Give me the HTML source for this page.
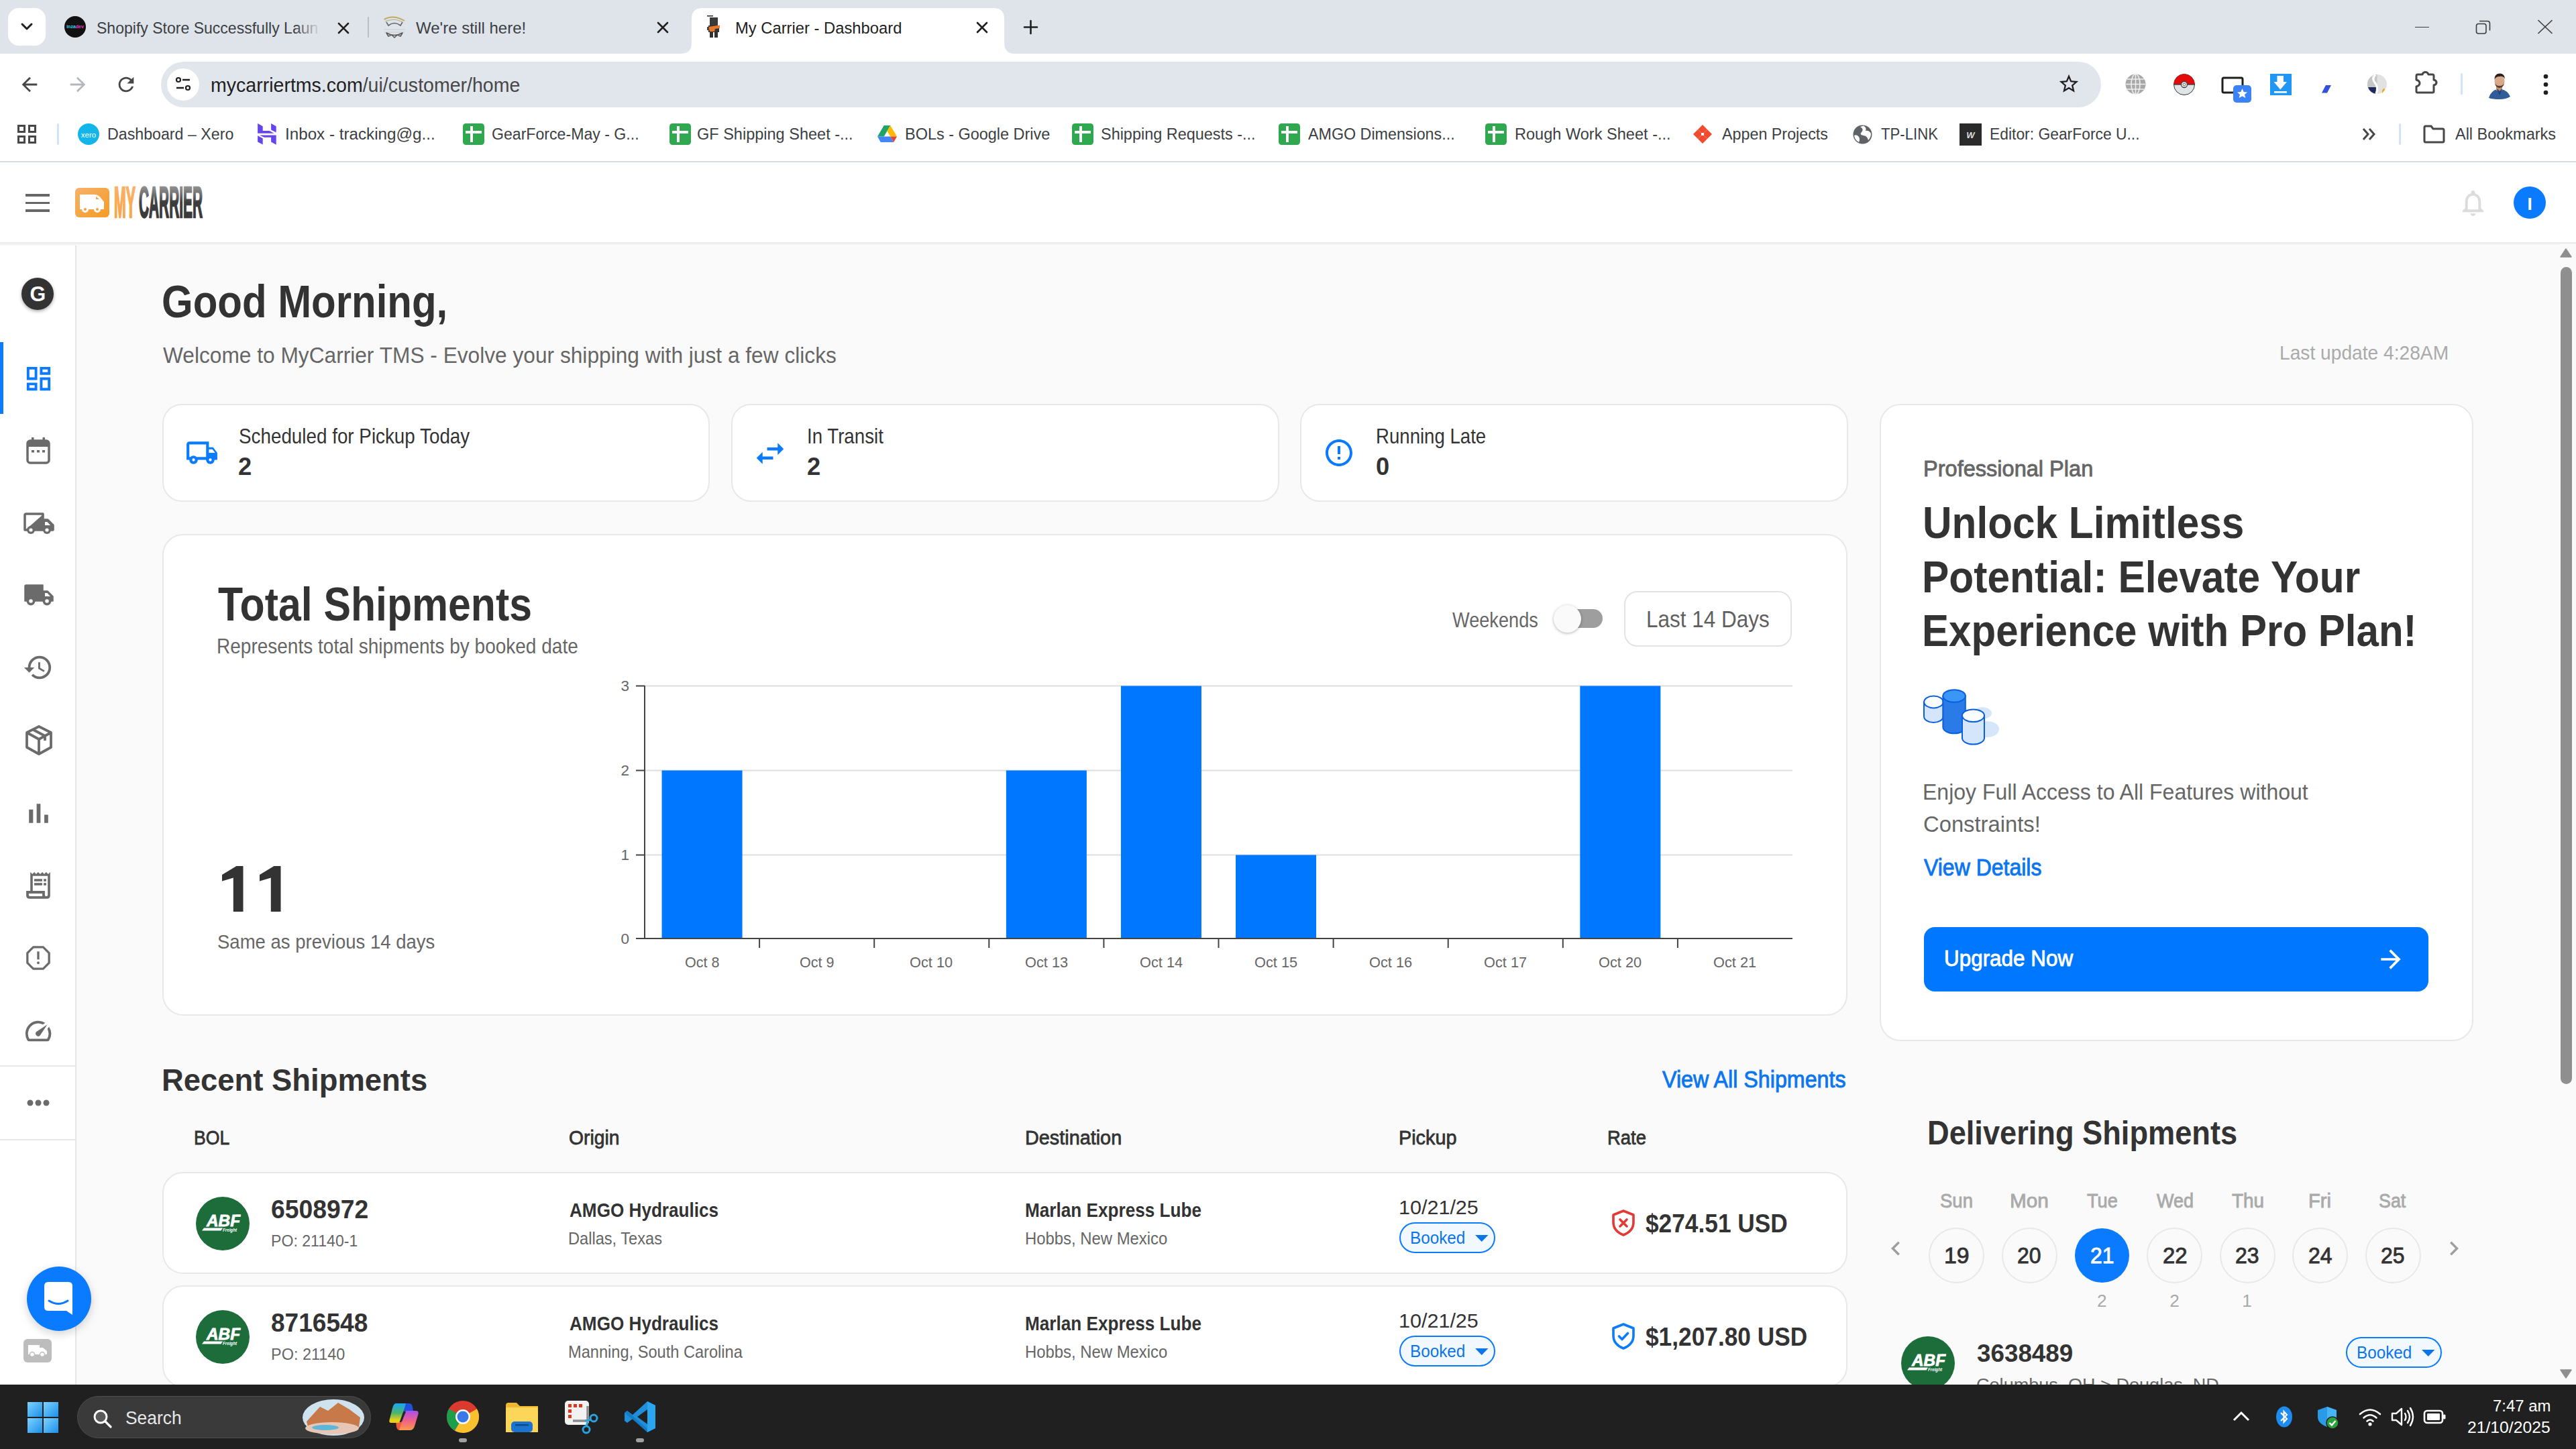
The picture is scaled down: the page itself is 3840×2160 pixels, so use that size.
<!DOCTYPE html>
<html><head><meta charset="utf-8"><style>
html,body{margin:0;padding:0;}
body{width:3840px;height:2160px;overflow:hidden;position:relative;background:#fafafa;font-family:"Liberation Sans", sans-serif;}
.t{position:absolute;white-space:nowrap;transform-origin:0 50%;}
svg{overflow:visible}
</style></head><body>
<div style="position:absolute;left:0px;top:0px;width:3840px;height:2160px;background:#fafafa"></div>
<div style="position:absolute;left:0px;top:0px;width:3840px;height:80px;background:#dfe3ea"></div>
<div style="position:absolute;left:12px;top:12px;width:56px;height:56px;background:#fff;border-radius:16px"></div>
<svg style="position:absolute;left:28px;top:32px;" width="24" height="16" viewBox="0 0 24 16"><path d="M5 4 L12 11 L19 4" stroke="#1f1f1f" stroke-width="3" fill="none" stroke-linecap="round" stroke-linejoin="round"/></svg>
<div style="position:absolute;left:96px;top:24px;width:32px;height:32px;background:#111;border-radius:50%"></div>
<svg style="position:absolute;left:100px;top:34px;" width="24" height="12" viewBox="0 0 24 12"><text x="12" y="8" font-size="7" font-weight="bold" fill="#35d0e8" text-anchor="middle" font-family="Liberation Sans">inza<tspan fill="#e83ecb">dev</tspan></text></svg>
<div class="t" style="left:144.05px;top:29.87px;font-size:24.13px;line-height:24.13px;color:#3c4043;transform:scaleX(0.9547);">Shopify Store Successfully Laun</div>
<div style="position:absolute;left:440px;top:20px;width:45px;height:40px;background:linear-gradient(to right, rgba(223,227,234,0), #dfe3ea 85%)"></div>
<svg style="position:absolute;left:504.0px;top:34.0px;" width="16" height="16" viewBox="0 0 16 16"><path d="M1 1 L15 15 M15 1 L1 15" stroke="#1f1f1f" stroke-width="2.6" stroke-linecap="round"/></svg>
<div style="position:absolute;left:548px;top:25px;width:2px;height:31px;background:#b9bec6;border-radius:1px"></div>
<svg style="position:absolute;left:570px;top:22px;" width="36" height="36" viewBox="0 0 36 36"><path d="M2.5 7 Q16 -1 33 9" stroke="#c4a85a" stroke-width="2" fill="none"/><path d="M4 10 Q18 4 30 11" stroke="#aab08a" stroke-width="1.2" fill="none"/><path d="M6 11 L9 16 Q18 9 27 16 L30 11" stroke="#666" stroke-width="1.6" fill="none"/><path d="M2 22 H34 M3 26 H33" stroke="#c9ccd2" stroke-width="1.2"/><path d="M6 27 L9 32 L14 30 L18 34 L22 30 L27 32 L30 27 Q18 34 6 27Z" fill="#f4f4f4" stroke="#555" stroke-width="1.6" stroke-linejoin="round"/></svg>
<div class="t" style="left:620.00px;top:29.87px;font-size:24.13px;line-height:24.13px;color:#3c4043;transform:scaleX(0.9948);">We&#x27;re still here!</div>
<svg style="position:absolute;left:980.0px;top:33.0px;" width="16" height="16" viewBox="0 0 16 16"><path d="M1 1 L15 15 M15 1 L1 15" stroke="#1f1f1f" stroke-width="2.6" stroke-linecap="round"/></svg>
<svg style="position:absolute;left:1015px;top:12px;" width="498" height="68" viewBox="0 0 498 68"><path d="M0 68 Q16 68 16 52 L16 16 Q16 0 32 0 L466 0 Q482 0 482 16 L482 52 Q482 68 498 68 Z" fill="#fff"/></svg>
<svg style="position:absolute;left:1052px;top:22px;" width="24" height="36" viewBox="0 0 24 36"><rect x="2" y="1" width="9" height="1.6" fill="#333"/><rect x="6" y="4" width="12" height="12" fill="#3a3a3a"/><rect x="4" y="16" width="16" height="10" fill="#333"/><path d="M4 18 L21 15.5 L21 20 L14 21 L13 25 L6 25 L5 21Z" fill="#e8772a"/><rect x="2" y="18" width="3" height="5" fill="#444"/><rect x="6" y="26" width="5" height="8" fill="#333"/><rect x="13" y="26" width="5" height="8" fill="#333"/></svg>
<div class="t" style="left:1096.01px;top:29.87px;font-size:24.13px;line-height:24.13px;color:#1f1f1f;transform:scaleX(0.9855);">My Carrier - Dashboard</div>
<svg style="position:absolute;left:1456.0px;top:33.0px;" width="16" height="16" viewBox="0 0 16 16"><path d="M1 1 L15 15 M15 1 L1 15" stroke="#1f1f1f" stroke-width="2.6" stroke-linecap="round"/></svg>
<svg style="position:absolute;left:1526px;top:30px;" width="21" height="21" viewBox="0 0 21 21"><path d="M10.5 1 V20 M1 10.5 H20" stroke="#1f1f1f" stroke-width="2.6" stroke-linecap="round"/></svg>
<div style="position:absolute;left:3600px;top:39.5px;width:21px;height:1.5px;background:#3c3c3c"></div>
<svg style="position:absolute;left:3690px;top:30px;" width="24" height="21" viewBox="0 0 24 21"><rect x="1.5" y="5.5" width="14.5" height="14.5" rx="3" stroke="#3c3c3c" stroke-width="1.6" fill="none"/><path d="M6 1.5 H18 Q21.5 1.5 21.5 5 V15.5" stroke="#3c3c3c" stroke-width="1.6" fill="none"/></svg>
<svg style="position:absolute;left:3782px;top:29px;" width="24" height="22" viewBox="0 0 24 22"><path d="M1.5 1 L22.5 21 M22.5 1 L1.5 21" stroke="#3c3c3c" stroke-width="1.6"/></svg>
<div style="position:absolute;left:0px;top:80px;width:3840px;height:160px;background:#fff"></div>
<div style="position:absolute;left:0px;top:240px;width:3840px;height:2px;background:#d9dce0"></div>
<svg style="position:absolute;left:27.0px;top:109.0px;" width="34" height="34" viewBox="0 0 24 24"><path d="M20 11H7.83l5.59-5.59L12 4l-8 8 8 8 1.41-1.41L7.83 13H20v-2z" fill="#474747" /></svg>
<svg style="position:absolute;left:98.5px;top:109.0px;" width="34" height="34" viewBox="0 0 24 24"><path d="M12 4l-1.41 1.41L16.17 11H4v2h12.17l-5.58 5.59L12 20l8-8z" fill="#b4b7bb" /></svg>
<svg style="position:absolute;left:171.0px;top:109.0px;" width="34" height="34" viewBox="0 0 24 24"><path d="M17.65 6.35C16.2 4.9 14.21 4 12 4c-4.42 0-7.99 3.58-7.99 8s3.57 8 7.99 8c3.73 0 6.84-2.55 7.73-6h-2.08c-.82 2.33-3.04 4-5.65 4-3.31 0-6-2.69-6-6s2.69-6 6-6c1.66 0 3.14.69 4.22 1.78L13 11h7V4l-2.35 2.35z" fill="#474747" /></svg>
<div style="position:absolute;left:240px;top:92px;width:2892px;height:68px;background:#e1e5ec;border-radius:34px"></div>
<div style="position:absolute;left:249px;top:102px;width:48px;height:48px;background:#fff;border-radius:50%"></div>
<svg style="position:absolute;left:261px;top:114px;" width="24" height="24" viewBox="0 0 24 24"><circle cx="5" cy="5" r="3" stroke="#1f1f1f" stroke-width="2.2" fill="none"/><path d="M11 5 H22 M2 17 H13" stroke="#1f1f1f" stroke-width="2.4"/><circle cx="19" cy="17" r="3" stroke="#1f1f1f" stroke-width="2.2" fill="none"/></svg>
<div class="t" style="left:314.03px;top:111.82px;font-size:29.50px;line-height:29.50px;color:#1f1f1f;transform:scaleX(0.9672);">mycarriertms.com<span style="color:#474747">/ui/customer/home</span></div>
<svg style="position:absolute;left:3067.0px;top:108.0px;" width="34" height="34" viewBox="0 0 24 24"><path d="M22 9.24l-7.19-.62L12 2 9.19 8.63 2 9.24l5.46 4.73L5.82 21 12 17.27 18.18 21l-1.63-7.03L22 9.24zM12 15.4l-3.76 2.27 1-4.28-3.32-2.88 4.38-.38L12 6.1l1.71 4.04 4.38.38-3.32 2.88 1 4.28L12 15.4z" fill="#1f1f1f" /></svg>
<svg style="position:absolute;left:3167px;top:109px;" width="33" height="33" viewBox="0 0 33 33"><circle cx="16.5" cy="16.5" r="15" fill="#a8a8a8"/><g stroke="#eee" stroke-width="1.6" fill="none"><ellipse cx="16.5" cy="16.5" rx="6.5" ry="15"/><path d="M2 16.5 H31 M4 9 H29 M4 24 H29 M16.5 1.5 V31.5"/></g></svg>
<svg style="position:absolute;left:3239px;top:109px;" width="34" height="34" viewBox="0 0 34 34"><circle cx="17" cy="17" r="15.5" fill="#dfe4e7" stroke="#333" stroke-width="1"/><path d="M1.5 17 A15.5 15.5 0 0 1 32.5 17Z" fill="#e30b0b"/><path d="M1.5 17 H32.5" stroke="#333" stroke-width="1.2"/><circle cx="17" cy="17" r="4.5" fill="#f4f4f4" stroke="#444" stroke-width="1.3"/><circle cx="17" cy="17" r="2" fill="none" stroke="#666" stroke-width="1"/></svg>
<svg style="position:absolute;left:3311px;top:112.5px;" width="46" height="40" viewBox="0 0 46 40"><rect x="2" y="3" width="30" height="22" rx="2" stroke="#1f1f1f" stroke-width="3" fill="none"/><rect x="18" y="14" width="27" height="26" rx="5" fill="#3b82f6"/><path d="M31.5 19 l2.2 5 5.3 .4-4 3.5 1.3 5.2-4.8-2.8-4.8 2.8 1.3-5.2-4-3.5 5.3-.4z" fill="#fff"/></svg>
<svg style="position:absolute;left:3383px;top:109px;" width="34" height="34" viewBox="0 0 34 34"><rect x="1" y="1" width="32" height="32" fill="#2196f3"/><path d="M11.5 4 H21 V13 H26 L16.25 24.5 L6.5 13 H11.5Z" fill="#fff"/><rect x="7" y="27" width="19" height="2.6" fill="#fff"/></svg>
<svg style="position:absolute;left:3455px;top:122px;" width="24" height="20" viewBox="0 0 24 20"><path d="M6 16.5 L12 5 H20 L14 16.5Z" fill="#3350d8"/></svg>
<svg style="position:absolute;left:3527px;top:110px;" width="34" height="32" viewBox="0 0 34 32"><circle cx="16.5" cy="15.5" r="14.5" fill="#e2e2e2"/><path d="M16.5 1 A14.5 14.5 0 0 0 2 15.5 A14.5 14.5 0 0 0 16.5 30 Z" fill="#c6c6c6"/><path d="M3 20 H16 V30 Q6 29 3 20Z" fill="#1c2a5c"/><path d="M14 1.5 Q8 7 13 13 Q19 19 15 30" stroke="#fff" stroke-width="3.2" fill="none"/><path d="M24 25 L27 21 L28 24 L24 29Z" fill="#f2a71b"/></svg>
<svg style="position:absolute;left:3600px;top:106px;" width="38" height="36" viewBox="0 0 38 36"><path d="M4 5 H11 Q12 1.5 15.5 1.5 Q19 1.5 20 5 H26 Q28 5 28 7 V13 Q32 14 32 17 Q32 20 28 21 V30 Q28 32 26 32 H4 Q2 32 2 30 V23 Q7 21.5 7 18 Q7 14.5 2 13 V7 Q2 5 4 5Z" fill="none" stroke="#474747" stroke-width="3" stroke-linejoin="round"/></svg>
<div style="position:absolute;left:3668px;top:109px;width:3px;height:32px;background:#d3e3fd;border-radius:2px"></div>
<svg style="position:absolute;left:3710px;top:106px;" width="32" height="42" viewBox="0 0 32 42"><path d="M0 40 Q3 29 13 27 H19 Q28 29 32 38 Q26 42 16 42 Q6 42 0 40Z" fill="#2f5d9a"/><rect x="11" y="21" width="9" height="8" fill="#c48f72"/><ellipse cx="16" cy="15" rx="7.5" ry="9.5" fill="#d9a88a"/><path d="M8.5 13 Q8 4 16 3.5 Q24 3.5 24 12 Q22 7 16 8 Q10 8 8.5 13Z" fill="#2a1f1a"/><path d="M9 17 Q10 25 16 25 Q22 25 23 17 Q22 22 16 22 Q10 22 9 17Z" fill="#5a3f30"/><path d="M13 27 L16 34 L19 27" stroke="#1f3f6e" stroke-width="1.5" fill="none"/></svg>
<svg style="position:absolute;left:3787px;top:110px;" width="16" height="32" viewBox="0 0 16 32"><circle cx="8" cy="4" r="3.3" fill="#1f1f1f"/><circle cx="8" cy="16" r="3.3" fill="#1f1f1f"/><circle cx="8" cy="28" r="3.3" fill="#1f1f1f"/></svg>
<svg style="position:absolute;left:26px;top:186px;" width="28" height="28" viewBox="0 0 28 28"><g stroke="#474747" stroke-width="3" fill="none"><rect x="1.5" y="1.5" width="9" height="9"/><rect x="17.5" y="1.5" width="9" height="9"/><rect x="1.5" y="17.5" width="9" height="9"/><rect x="17.5" y="17.5" width="9" height="9"/></g></svg>
<div style="position:absolute;left:85px;top:184px;width:3px;height:32px;background:#d3e3fd;border-radius:2px"></div>
<div style="position:absolute;left:116px;top:184px;width:32px;height:32px;background:#13b5ea;border-radius:50%"></div>
<svg style="position:absolute;left:116px;top:184px;" width="32" height="32" viewBox="0 0 32 32"><text x="16" y="20.5" font-size="11.5" fill="#fff" text-anchor="middle" font-family="Liberation Sans">xero</text></svg>
<div class="t" style="left:160.03px;top:187.99px;font-size:23.98px;line-height:23.98px;color:#3c4043;transform:scaleX(0.9679);">Dashboard – Xero</div>
<svg style="position:absolute;left:370px;top:175px;" width="60" height="50" viewBox="0 0 60 50"><g fill="#6646ea"><path d="M14.1 9.1 L21.7 13.3 V20 H31.7 L38.6 23.8 H14.1Z"/><path d="M34.1 9.1 L41.7 13.3 V22.6 L34.1 18.6Z"/><path d="M14.1 27.2 L21.7 31.2 V40.5 L14.1 36.6Z"/><path d="M16.9 26.4 H41.7 V40.7 L34.1 36.6 V29.8 H23.8Z"/></g></svg>
<div class="t" style="left:424.98px;top:187.99px;font-size:23.98px;line-height:23.98px;color:#3c4043;transform:scaleX(1.0099);">Inbox - tracking@g...</div>
<svg style="position:absolute;left:690px;top:184px;" width="32" height="32" viewBox="0 0 32 32"><rect x="0" y="0" width="32" height="32" rx="4.5" fill="#2fa84f"/><rect x="11" y="4" width="4" height="24" fill="#fff"/><rect x="4" y="11" width="24" height="4" fill="#fff"/></svg>
<div class="t" style="left:733.04px;top:187.99px;font-size:23.98px;line-height:23.98px;color:#3c4043;transform:scaleX(0.9641);">GearForce-May - G...</div>
<svg style="position:absolute;left:998px;top:184px;" width="32" height="32" viewBox="0 0 32 32"><rect x="0" y="0" width="32" height="32" rx="4.5" fill="#2fa84f"/><rect x="11" y="4" width="4" height="24" fill="#fff"/><rect x="4" y="11" width="24" height="4" fill="#fff"/></svg>
<div class="t" style="left:1039.02px;top:187.99px;font-size:23.98px;line-height:23.98px;color:#3c4043;transform:scaleX(0.9809);">GF Shipping Sheet -...</div>
<svg style="position:absolute;left:1307.5px;top:187px;" width="29" height="26" viewBox="0 0 29 26"><path d="M9.7 0 H19.3 L14.5 8.3 L9.7 16.6 H0Z" fill="#1fa463"/><path d="M19.3 0 L29 16.6 H19.3 L14.5 8.3Z" fill="#ffba00"/><path d="M0 16.6 H19.3 L24.2 25 H4.8Z" fill="#4285f4"/><path d="M19.3 16.6 H29 L24.2 25Z" fill="#ea4335"/></svg>
<div class="t" style="left:1349.02px;top:187.99px;font-size:23.98px;line-height:23.98px;color:#3c4043;transform:scaleX(0.9782);">BOLs - Google Drive</div>
<svg style="position:absolute;left:1598px;top:184px;" width="32" height="32" viewBox="0 0 32 32"><rect x="0" y="0" width="32" height="32" rx="4.5" fill="#2fa84f"/><rect x="11" y="4" width="4" height="24" fill="#fff"/><rect x="4" y="11" width="24" height="4" fill="#fff"/></svg>
<div class="t" style="left:1641.02px;top:187.99px;font-size:23.98px;line-height:23.98px;color:#3c4043;transform:scaleX(0.9778);">Shipping Requests -...</div>
<svg style="position:absolute;left:1906px;top:184px;" width="32" height="32" viewBox="0 0 32 32"><rect x="0" y="0" width="32" height="32" rx="4.5" fill="#2fa84f"/><rect x="11" y="4" width="4" height="24" fill="#fff"/><rect x="4" y="11" width="24" height="4" fill="#fff"/></svg>
<div class="t" style="left:1950.00px;top:187.99px;font-size:23.98px;line-height:23.98px;color:#3c4043;transform:scaleX(0.9712);">AMGO Dimensions...</div>
<svg style="position:absolute;left:2214px;top:184px;" width="32" height="32" viewBox="0 0 32 32"><rect x="0" y="0" width="32" height="32" rx="4.5" fill="#2fa84f"/><rect x="11" y="4" width="4" height="24" fill="#fff"/><rect x="4" y="11" width="24" height="4" fill="#fff"/></svg>
<div class="t" style="left:2258.02px;top:187.99px;font-size:23.98px;line-height:23.98px;color:#3c4043;transform:scaleX(0.9828);">Rough Work Sheet -...</div>
<svg style="position:absolute;left:2524px;top:186px;" width="28" height="28" viewBox="0 0 28 28"><g fill="#f04b2e"><path d="M14 0 L21 7 L14 14 L7 7Z"/><path d="M14 14 L21 21 L14 28 L7 21Z"/><path d="M7 7 L14 14 L7 21 L0 14Z"/><path d="M21 7 L28 14 L21 21 L14 14Z"/></g><rect x="12" y="12" width="4" height="4" fill="#fff"/></svg>
<div class="t" style="left:2567.00px;top:187.99px;font-size:23.98px;line-height:23.98px;color:#3c4043;transform:scaleX(0.9719);">Appen Projects</div>
<svg style="position:absolute;left:2762px;top:186px;" width="29" height="29" viewBox="0 0 29 29"><circle cx="14.5" cy="14.5" r="14" fill="#5f6368"/><path d="M11 3 Q17 6 13 11 Q9 15 16 16 Q22 17 23 23 Q27 19 27 13 Q24 8 19 9 Q21 4 16 1.5Z" fill="#fff"/><path d="M2 16 Q6 14 9 18 Q11 22 9 26 Q3 23 2 16Z" fill="#fff"/></svg>
<div class="t" style="left:2804.00px;top:187.99px;font-size:23.98px;line-height:23.98px;color:#3c4043;transform:scaleX(0.9248);">TP-LINK</div>
<svg style="position:absolute;left:2921px;top:184px;" width="33" height="33" viewBox="0 0 33 33"><rect x="0" y="0" width="33" height="33" fill="#2a2a2a"/><text x="16.5" y="22" font-size="13" font-weight="bold" font-style="italic" fill="#ddd" text-anchor="middle" font-family="Liberation Sans">W</text></svg>
<div class="t" style="left:2966.05px;top:187.99px;font-size:23.98px;line-height:23.98px;color:#3c4043;transform:scaleX(0.9535);">Editor: GearForce U...</div>
<svg style="position:absolute;left:3521px;top:189px;" width="22" height="22" viewBox="0 0 22 22"><path d="M2 3 L9 11 L2 19 M11 3 L18 11 L11 19" stroke="#474747" stroke-width="3" fill="none"/></svg>
<div style="position:absolute;left:3576px;top:184px;width:3px;height:32px;background:#d3e3fd;border-radius:2px"></div>
<svg style="position:absolute;left:3612px;top:186px;" width="33" height="28" viewBox="0 0 33 28"><path d="M2 4 Q2 2 4 2 H12 L15 6 H29 Q31 6 31 8 V24 Q31 26 29 26 H4 Q2 26 2 24Z" stroke="#474747" stroke-width="3" fill="none"/></svg>
<div class="t" style="left:3660.00px;top:187.99px;font-size:23.98px;line-height:23.98px;color:#3c4043;transform:scaleX(0.9792);">All Bookmarks</div>
<div style="position:absolute;left:0px;top:242px;width:3840px;height:121px;background:#fff"></div>
<div style="position:absolute;left:0px;top:361px;width:3840px;height:5px;background:linear-gradient(#e9e9e9, #efefef 40%, rgba(245,245,245,0.6) 80%, rgba(250,250,250,0))"></div>
<div style="position:absolute;left:38px;top:289px;width:36px;height:3.5px;background:#666"></div>
<div style="position:absolute;left:38px;top:300.5px;width:36px;height:3.5px;background:#666"></div>
<div style="position:absolute;left:38px;top:312px;width:36px;height:3.5px;background:#666"></div>
<svg style="position:absolute;left:111px;top:279px;" width="194" height="46" viewBox="0 0 194 46">
<defs><linearGradient id="og" x1="0" y1="0" x2="1" y2="1"><stop offset="0" stop-color="#f7b26a"/><stop offset="1" stop-color="#f59a25"/></linearGradient>
<linearGradient id="gg" x1="0" y1="0" x2="0" y2="1"><stop offset="0" stop-color="#b4b4b4"/><stop offset=".3" stop-color="#777"/><stop offset=".5" stop-color="#3d3d3d"/><stop offset="1" stop-color="#383838"/></linearGradient>
<linearGradient id="oy" x1="0" y1="0" x2="0" y2="1"><stop offset="0" stop-color="#f9b46c"/><stop offset="1" stop-color="#f7a23c"/></linearGradient></defs>
<rect x="1" y="1" width="51" height="44" rx="6" fill="url(#og)"/>
<path d="M8 11 H30 Q36 11 40 17 L44 22 V33 H8Z" fill="#fff"/><path d="M32 14 L37 18 H32Z" fill="#f5a040"/>
<circle cx="16" cy="33" r="5" fill="#fff"/><circle cx="16" cy="33" r="2" fill="#f5a040"/>
<circle cx="34" cy="33" r="5" fill="#fff"/><circle cx="34" cy="33" r="2" fill="#f5a040"/>
<text x="59" y="44.5" font-family="Liberation Sans" font-weight="bold" font-size="64" fill="url(#oy)" stroke="url(#oy)" stroke-width="2.6" textLength="32" lengthAdjust="spacingAndGlyphs">MY</text>
<text x="96" y="44.5" font-family="Liberation Sans" font-weight="bold" font-size="64" fill="url(#gg)" stroke="url(#gg)" stroke-width="2.4" textLength="95" lengthAdjust="spacingAndGlyphs">CARRIER</text>
</svg>
<svg style="position:absolute;left:3662.5px;top:278.5px;" width="47" height="47" viewBox="0 0 24 24"><path d="M12 22c1.1 0 2-.9 2-2h-4c0 1.1.89 2 2 2zm6-6v-5c0-3.07-1.64-5.64-4.5-6.32V4c0-.83-.67-1.5-1.5-1.5s-1.5.67-1.5 1.5v.68C7.63 5.36 6 7.92 6 11v5l-2 2v1h16v-1l-2-2zm-2 1H8v-6c0-2.48 1.51-4.5 4-4.5s4 2.02 4 4.5v6z" fill="#dcdcdc" /></svg>
<div style="position:absolute;left:3747px;top:278px;width:48px;height:48px;background:#0a7aff;border-radius:50%"></div>
<div class="t" style="left:3767.50px;top:290.65px;font-size:26.16px;line-height:26.16px;color:#fff;font-weight:bold;">I</div>
<div style="position:absolute;left:0px;top:366px;width:112px;height:1698px;background:#fff"></div>
<div style="position:absolute;left:112px;top:366px;width:2px;height:1698px;background:#e6e6e6"></div>
<div style="position:absolute;left:32px;top:414px;width:48px;height:48px;background:#333;border-radius:50%;box-shadow:0 2px 5px rgba(0,0,0,.35)"></div>
<div class="t" style="left:44.50px;top:422.96px;font-size:30.52px;line-height:30.52px;color:#fff;font-weight:bold;">G</div>
<div style="position:absolute;left:0px;top:510px;width:5px;height:107px;background:#0a7aff"></div>
<svg style="position:absolute;left:33.5px;top:540.5px;" width="47" height="47" viewBox="0 0 24 24"><path d="M19 5v2h-4V5h4M9 5v6H5V5h4m10 8v6h-4v-6h4M9 17v2H5v-2h4M21 3h-8v6h8V3zM11 3H3v10h8V3zm10 8h-8v10h8V11zm-10 4H3v6h8v-6z" fill="#0a7aff" /></svg>
<svg style="position:absolute;left:39px;top:652px;" width="36" height="40" viewBox="0 0 36 40"><rect x="2" y="5" width="32" height="33" rx="4" fill="none" stroke="#6b6b6b" stroke-width="3.5"/><rect x="2" y="5" width="32" height="9" fill="#6b6b6b"/><rect x="8" y="0" width="3.5" height="8" fill="#6b6b6b"/><rect x="24.5" y="0" width="3.5" height="8" fill="#6b6b6b"/><rect x="8" y="19" width="4" height="3.5" fill="#6b6b6b"/><rect x="16" y="19" width="4" height="3.5" fill="#6b6b6b"/><rect x="24" y="19" width="4" height="3.5" fill="#6b6b6b"/></svg>
<svg style="position:absolute;left:35px;top:764px;" width="45" height="33" viewBox="0 0 45 33"><path d="M4 2 H29 V11 H36 L44 19 V26 H2 V4 Q2 2 4 2Z" fill="none" stroke="#6b6b6b" stroke-width="3.5" stroke-linejoin="round"/><path d="M3 26 L29 3 V26Z" fill="#6b6b6b"/><path d="M29 11 H36 L44 19 V26 H29Z" fill="#6b6b6b"/><path d="M32 14 H35.5 L40 19 H32Z" fill="#fff"/><circle cx="11" cy="26" r="6" fill="#6b6b6b"/><circle cx="11" cy="26" r="2.6" fill="#fff"/><circle cx="35" cy="26" r="6" fill="#6b6b6b"/><circle cx="35" cy="26" r="2.6" fill="#fff"/></svg>
<svg style="position:absolute;left:35px;top:871px;" width="45" height="33" viewBox="0 0 45 33"><path d="M4 1 H29 V10 H36 L44 18 V25 H2 V3 Q2 1 4 1Z" fill="#6b6b6b" stroke="#6b6b6b" stroke-width="1.5" stroke-linejoin="round"/><path d="M32 13 H35.5 L40 18 H32Z" fill="#fff"/><circle cx="11" cy="25" r="6.5" fill="#6b6b6b"/><circle cx="11" cy="25" r="2.8" fill="#fff"/><circle cx="35" cy="25" r="6.5" fill="#6b6b6b"/><circle cx="35" cy="25" r="2.8" fill="#fff"/></svg>
<svg style="position:absolute;left:34.0px;top:972.0px;" width="46" height="46" viewBox="0 0 24 24"><path d="M13 3c-4.97 0-9 4.03-9 9H1l3.89 3.89.07.14L9 12H6c0-3.87 3.13-7 7-7s7 3.13 7 7-3.13 7-7 7c-1.93 0-3.68-.79-4.94-2.06l-1.42 1.42C8.27 19.99 10.51 21 13 21c4.97 0 9-4.03 9-9s-4.03-9-9-9zm-1 5v5l4.28 2.54.72-1.21-3.5-2.08V8H12z" fill="#6b6b6b" /></svg>
<svg style="position:absolute;left:37px;top:1081px;" width="42" height="45" viewBox="0 0 42 45"><g fill="none" stroke="#6b6b6b" stroke-width="3.8" stroke-linejoin="round"><path d="M21 2 L39 11 V33 L21 43 L3 33 V11Z"/><path d="M3 11 L21 21 L39 11 M21 21 V43"/><path d="M12 6.5 L30 16 V23"/></g></svg>
<svg style="position:absolute;left:33.0px;top:1187.5px;" width="49" height="49" viewBox="0 0 24 24"><path d="M5 9.2h3V19H5zM10.6 5h2.8v14h-2.8zm5.6 8H19v6h-2.8z" fill="#6b6b6b" /></svg>
<svg style="position:absolute;left:25px;top:1290px;" width="65" height="65" viewBox="0 0 65 65"><path d="M20.2 10 L23.3 13 L26.2 10 L28.9 13 L31.8 10 L35 13 L38.1 10 L41 13 L43.9 10 L46.9 13 L49.8 10 V44.8 Q49.8 49.8 44.8 49.8 H19.1 Q14.1 49.8 14.1 44.8 V38.1 H20.2Z" fill="#6b6b6b"/><path d="M23.8 15.7 H46.2 V44.3 Q46.2 46 44.3 46 H43.6 Q41.9 46 41.9 44.3 V38.1 H23.8Z" fill="#fff"/><path d="M17.9 41.9 H38.1 V46 H19.5 Q17.9 46 17.9 44Z" fill="#fff"/><g fill="#6b6b6b"><rect x="26" y="20.2" width="11.9" height="3.6"/><rect x="40.1" y="20.2" width="3.8" height="3.6"/><rect x="26" y="26.2" width="11.9" height="3.6"/><rect x="40.1" y="26.2" width="3.8" height="3.6"/></g></svg>
<svg style="position:absolute;left:39.2px;top:1410px;" width="36" height="36" viewBox="0 0 39 39"><path d="M11.5 2 H27.5 L37 11.5 V27.5 L27.5 37 H11.5 L2 27.5 V11.5Z" fill="none" stroke="#6b6b6b" stroke-width="3.6" stroke-linejoin="round"/><rect x="17.7" y="9" width="3.6" height="13" fill="#6b6b6b"/><circle cx="19.5" cy="27.3" r="2.1" fill="#6b6b6b"/></svg>
<svg style="position:absolute;left:34.0px;top:1514.0px;" width="46" height="46" viewBox="0 0 24 24"><path d="M20.38 8.57l-1.23 1.85a8 8 0 0 1-.22 7.58H5.07A8 8 0 0 1 15.58 6.85l1.85-1.23A10 10 0 0 0 3.35 19a2 2 0 0 0 1.72 1h13.85a2 2 0 0 0 1.74-1 10 10 0 0 0-.27-10.44z M10.59 15.41a2 2 0 0 0 2.83 0l5.66-8.49-8.49 5.66a2 2 0 0 0 0 2.83z" fill="#6b6b6b" /></svg>
<div style="position:absolute;left:0px;top:1588px;width:112px;height:2px;background:#e8e8e8"></div>
<svg style="position:absolute;left:40px;top:1636px;" width="34" height="16" viewBox="0 0 34 16"><circle cx="5" cy="8" r="4.5" fill="#6b6b6b"/><circle cx="17" cy="8" r="4.5" fill="#6b6b6b"/><circle cx="29" cy="8" r="4.5" fill="#6b6b6b"/></svg>
<div style="position:absolute;left:0px;top:1698px;width:112px;height:2px;background:#e8e8e8"></div>
<div style="position:absolute;left:40px;top:1888px;width:96px;height:96px;background:#0a7aff;border-radius:50%;box-shadow:0 4px 14px rgba(0,0,0,.18)"></div>
<svg style="position:absolute;left:66px;top:1911px;" width="44" height="50" viewBox="0 0 44 50"><path d="M6 0 H36 Q42 0 42 6 V49 L33 43 H6 Q0 43 0 37 V6 Q0 0 6 0Z" fill="#fff"/><path d="M7 28 Q21 37 35 28" stroke="#0a7aff" stroke-width="3" fill="none" stroke-linecap="round"/></svg>
<div style="position:absolute;left:35px;top:1996px;width:42px;height:35px;background:#bdbdbd;border-radius:6px"></div>
<svg style="position:absolute;left:41px;top:2003px;" width="30" height="20" viewBox="0 0 30 20"><path d="M1 2 H18 V6 H23 L29 11 V16 H1Z" fill="#fff"/><circle cx="7" cy="16" r="3.5" fill="#fff" stroke="#bdbdbd" stroke-width="1.5"/><circle cx="22" cy="16" r="3.5" fill="#fff" stroke="#bdbdbd" stroke-width="1.5"/></svg>
<div style="position:absolute;left:3816px;top:364px;width:24px;height:1700px;background:#fafafa"></div>
<svg style="position:absolute;left:3816px;top:370px;" width="18" height="15" viewBox="0 0 18 15"><path d="M9 1 L17 13 H1Z" fill="#8f8f8f" stroke="#8f8f8f" stroke-width="1.5" stroke-linejoin="round"/></svg>
<div style="position:absolute;left:3817px;top:398px;width:17px;height:1218px;background:#8f8f8f;border-radius:9px"></div>
<svg style="position:absolute;left:3816px;top:2041px;" width="18" height="15" viewBox="0 0 18 15"><path d="M1 1 H17 L9 13Z" fill="#8f8f8f" stroke="#8f8f8f" stroke-width="1.5" stroke-linejoin="round"/></svg>
<div class="t" style="left:241.24px;top:414.96px;font-size:68.32px;line-height:68.32px;color:#333333;font-weight:bold;transform:scaleX(0.8777);">Good Morning,</div>
<div class="t" style="left:243.00px;top:513.71px;font-size:32.70px;line-height:32.70px;color:#666666;transform:scaleX(0.9689);">Welcome to MyCarrier TMS - Evolve your shipping with just a few clicks</div>
<div class="t" style="left:3398.06px;top:512.19px;font-size:29.07px;line-height:29.07px;color:#aaaaaa;transform:scaleX(0.9691);">Last update 4:28AM</div>
<div style="position:absolute;left:242px;top:602px;width:816px;height:146px;background:#fff;border:2px solid #e8e8e8;box-sizing:border-box;border-radius:29px"></div>
<div class="t" style="left:355.59px;top:634.96px;font-size:30.52px;line-height:30.52px;color:#333333;transform:scaleX(0.9113);">Scheduled for Pickup Today</div>
<div class="t" style="left:355.00px;top:678.03px;font-size:36.34px;line-height:36.34px;color:#333333;font-weight:bold;">2</div>
<div style="position:absolute;left:1090px;top:602px;width:817px;height:146px;background:#fff;border:2px solid #e8e8e8;box-sizing:border-box;border-radius:29px"></div>
<div class="t" style="left:1202.69px;top:634.96px;font-size:30.52px;line-height:30.52px;color:#333333;transform:scaleX(0.9071);">In Transit</div>
<div class="t" style="left:1203.00px;top:678.03px;font-size:36.34px;line-height:36.34px;color:#333333;font-weight:bold;">2</div>
<div style="position:absolute;left:1938px;top:602px;width:817px;height:146px;background:#fff;border:2px solid #e8e8e8;box-sizing:border-box;border-radius:29px"></div>
<div class="t" style="left:2050.69px;top:634.96px;font-size:30.52px;line-height:30.52px;color:#333333;transform:scaleX(0.9044);">Running Late</div>
<div class="t" style="left:2051.00px;top:678.03px;font-size:36.34px;line-height:36.34px;color:#333333;font-weight:bold;">0</div>
<svg style="position:absolute;left:275.5px;top:650.0px;" width="50" height="50" viewBox="0 0 24 24"><path d="M20 8h-3V4H3c-1.1 0-2 .9-2 2v11h2c0 1.66 1.34 3 3 3s3-1.34 3-3h6c0 1.66 1.34 3 3 3s3-1.34 3-3h2v-5l-3-4zm-.5 1.5l1.96 2.5H17V9.5h2.5zM6 18c-.55 0-1-.45-1-1s.45-1 1-1 1 .45 1 1-.45 1-1 1zm2.22-3c-.55-.61-1.33-1-2.22-1s-1.67.39-2.22 1H3V6h12v9H8.22zM18 18c-.55 0-1-.45-1-1s.45-1 1-1 1 .45 1 1-.45 1-1 1z" fill="#0a7aff" /></svg>
<svg style="position:absolute;left:1121.0px;top:648.5px;" width="54" height="54" viewBox="0 0 24 24"><path d="M6.99 11L3 15l3.99 4v-3H14v-2H6.99v-3zM21 9l-3.99-4v3H10v2h7.01v3L21 9z" fill="#0a7aff" /></svg>
<svg style="position:absolute;left:1972.0px;top:650.5px;" width="48" height="48" viewBox="0 0 24 24"><path d="M11 15h2v2h-2zm0-8h2v6h-2zm.99-5C6.47 2 2 6.48 2 12s4.47 10 9.99 10C17.52 22 22 17.52 22 12S17.52 2 11.99 2zM12 20c-4.42 0-8-3.58-8-8s3.58-8 8-8 8 3.58 8 8-3.58 8-8 8z" fill="#0a7aff" /></svg>
<div style="position:absolute;left:242px;top:796px;width:2512px;height:718px;background:#fff;border:2px solid #e8e8e8;box-sizing:border-box;border-radius:31px"></div>
<div class="t" style="left:325.00px;top:866.73px;font-size:69.77px;line-height:69.77px;color:#333333;font-weight:bold;transform:scaleX(0.8708);">Total Shipments</div>
<div class="t" style="left:323.16px;top:947.96px;font-size:30.52px;line-height:30.52px;color:#666666;transform:scaleX(0.9179);">Represents total shipments by booked date</div>
<svg style="position:absolute;left:331px;top:1291px;" width="32" height="68" viewBox="0 0 32 68"><path d="M0 13 L21.5 0 H31.5 V68 H16.8 V17.5 L0 22.5Z" fill="#333"/></svg>
<svg style="position:absolute;left:386.5px;top:1291px;" width="32" height="68" viewBox="0 0 32 68"><path d="M0 13 L21.5 0 H31.5 V68 H16.8 V17.5 L0 22.5Z" fill="#333"/></svg>
<div class="t" style="left:324.07px;top:1388.69px;font-size:29.65px;line-height:29.65px;color:#666666;transform:scaleX(0.9284);">Same as previous 14 days</div>
<div class="t" style="left:2165.00px;top:907.72px;font-size:31.98px;line-height:31.98px;color:#666666;transform:scaleX(0.8496);">Weekends</div>
<div style="position:absolute;left:2328px;top:908px;width:61px;height:28px;background:#9e9e9e;border-radius:14px"></div>
<div style="position:absolute;left:2316px;top:901.5px;width:41px;height:41px;background:#fafafa;border-radius:50%;box-shadow:0 1px 4px rgba(0,0,0,.3)"></div>
<div style="position:absolute;left:2421px;top:881px;width:250px;height:83px;background:#fff;border:2px solid #e3e3e3;box-sizing:border-box;border-radius:20px"></div>
<div class="t" style="left:2453.69px;top:906.26px;font-size:34.88px;line-height:34.88px;color:#606060;transform:scaleX(0.9025);">Last 14 Days</div>
<svg style="position:absolute;left:961px;top:1000px;" width="1720" height="420" viewBox="0 0 1720 420"><rect x="0" y="21.5" width="1711" height="2" fill="#dedede"/><rect x="0" y="147.5" width="1711" height="2" fill="#dedede"/><rect x="0" y="273.5" width="1711" height="2" fill="#dedede"/><rect x="25.55" y="148.50" width="120" height="250.50" fill="#0077ff"/><rect x="538.85" y="148.50" width="120" height="250.50" fill="#0077ff"/><rect x="709.95" y="22.50" width="120" height="376.50" fill="#0077ff"/><rect x="881.05" y="274.50" width="120" height="124.50" fill="#0077ff"/><rect x="1394.35" y="22.50" width="120" height="376.50" fill="#0077ff"/><rect x="-1" y="22" width="2" height="378" fill="#444"/><rect x="-1" y="398" width="1712" height="2" fill="#444"/><rect x="-13" y="21.5" width="13" height="2" fill="#444"/><rect x="-13" y="147.5" width="13" height="2" fill="#444"/><rect x="-13" y="273.5" width="13" height="2" fill="#444"/><rect x="-13" y="398" width="13" height="2" fill="#444"/><rect x="170.10" y="399" width="2" height="14" fill="#444"/><rect x="341.20" y="399" width="2" height="14" fill="#444"/><rect x="512.30" y="399" width="2" height="14" fill="#444"/><rect x="683.40" y="399" width="2" height="14" fill="#444"/><rect x="854.50" y="399" width="2" height="14" fill="#444"/><rect x="1025.60" y="399" width="2" height="14" fill="#444"/><rect x="1196.70" y="399" width="2" height="14" fill="#444"/><rect x="1367.80" y="399" width="2" height="14" fill="#444"/><rect x="1538.90" y="399" width="2" height="14" fill="#444"/></svg>
<div class="t" style="left:925.50px;top:1012.22px;font-size:22.53px;line-height:22.53px;color:#666666;">3</div>
<div class="t" style="left:925.50px;top:1138.22px;font-size:22.53px;line-height:22.53px;color:#666666;">2</div>
<div class="t" style="left:925.50px;top:1264.22px;font-size:22.53px;line-height:22.53px;color:#666666;">1</div>
<div class="t" style="left:925.50px;top:1388.72px;font-size:22.53px;line-height:22.53px;color:#666666;">0</div>
<div class="t" style="left:1020.59px;top:1423.72px;font-size:22.53px;line-height:22.53px;color:#666666;transform:scaleX(0.9563);">Oct 8</div>
<div class="t" style="left:1191.69px;top:1423.72px;font-size:22.53px;line-height:22.53px;color:#666666;transform:scaleX(0.9563);">Oct 9</div>
<div class="t" style="left:1356.48px;top:1423.72px;font-size:22.53px;line-height:22.53px;color:#666666;transform:scaleX(0.9660);">Oct 10</div>
<div class="t" style="left:1527.58px;top:1423.72px;font-size:22.53px;line-height:22.53px;color:#666666;transform:scaleX(0.9660);">Oct 13</div>
<div class="t" style="left:1698.68px;top:1423.72px;font-size:22.53px;line-height:22.53px;color:#666666;transform:scaleX(0.9660);">Oct 14</div>
<div class="t" style="left:1869.78px;top:1423.72px;font-size:22.53px;line-height:22.53px;color:#666666;transform:scaleX(0.9660);">Oct 15</div>
<div class="t" style="left:2040.88px;top:1423.72px;font-size:22.53px;line-height:22.53px;color:#666666;transform:scaleX(0.9660);">Oct 16</div>
<div class="t" style="left:2211.98px;top:1423.72px;font-size:22.53px;line-height:22.53px;color:#666666;transform:scaleX(0.9660);">Oct 17</div>
<div class="t" style="left:2383.08px;top:1423.72px;font-size:22.53px;line-height:22.53px;color:#666666;transform:scaleX(0.9660);">Oct 20</div>
<div class="t" style="left:2554.18px;top:1423.72px;font-size:22.53px;line-height:22.53px;color:#666666;transform:scaleX(0.9660);">Oct 21</div>
<div style="position:absolute;left:2802px;top:602px;width:885px;height:950px;background:#fff;border:2px solid #e8e8e8;box-sizing:border-box;border-radius:31px"></div>
<div class="t" style="left:2867.02px;top:682.59px;font-size:32.85px;line-height:32.85px;color:#666666;-webkit-text-stroke:0.89px #666666;transform:scaleX(0.9912);">Professional Plan</div>
<div class="t" style="left:2866.26px;top:746.30px;font-size:66.13px;line-height:66.13px;color:#333333;font-weight:bold;transform:scaleX(0.9124);">Unlock Limitless</div>
<div class="t" style="left:2865.34px;top:826.80px;font-size:66.13px;line-height:66.13px;color:#333333;font-weight:bold;transform:scaleX(0.9150);">Potential: Elevate Your</div>
<div class="t" style="left:2865.37px;top:907.30px;font-size:66.13px;line-height:66.13px;color:#333333;font-weight:bold;transform:scaleX(0.9085);">Experience with Pro Plan!</div>
<svg style="position:absolute;left:2866px;top:1026px;" width="120" height="90" viewBox="0 0 120 90">
<path d="M2 20.4 V42 A14.25 9 0 0 0 30.7 42 V20.4Z" fill="#d3e6fb" stroke="#0b5fe0" stroke-width="2"/><ellipse cx="16.45" cy="20.4" rx="14.25" ry="9" fill="#fafdff" stroke="#0b5fe0" stroke-width="2"/>
<ellipse cx="89" cy="37" rx="14" ry="9" fill="#d6e6fa"/><ellipse cx="96" cy="61" rx="18" ry="12" fill="#d6e6fa"/>
<path d="M30.4 11.5 V58 A16.7 9.3 0 0 0 63.8 58 V11.5Z" fill="#2a7be8" stroke="#0b5fe0" stroke-width="2"/><ellipse cx="47.1" cy="11.5" rx="16.7" ry="9.3" fill="#3a97f6" stroke="#0b5fe0" stroke-width="2"/>
<path d="M59 40.7 V74.2 A16.5 9.3 0 0 0 92 74.2 V40.7Z" fill="#d3e6fb" stroke="#0b5fe0" stroke-width="2"/><ellipse cx="75.5" cy="40.7" rx="16.5" ry="9.3" fill="#fafdff" stroke="#0b5fe0" stroke-width="2"/>
</svg>
<div class="t" style="left:2866.08px;top:1164.49px;font-size:33.43px;line-height:33.43px;color:#666666;transform:scaleX(0.9578);">Enjoy Full Access to All Features without</div>
<div class="t" style="left:2867.02px;top:1212.49px;font-size:33.43px;line-height:33.43px;color:#666666;transform:scaleX(0.9804);">Constraints!</div>
<div class="t" style="left:2868.00px;top:1276.26px;font-size:34.88px;line-height:34.88px;color:#0b76f0;-webkit-text-stroke:0.94px #0b76f0;transform:scaleX(0.9171);">View Details</div>
<div style="position:absolute;left:2868px;top:1382px;width:752px;height:96px;background:#0077ff;border-radius:16px"></div>
<div class="t" style="left:2898.12px;top:1412.49px;font-size:33.43px;line-height:33.43px;color:#fff;-webkit-text-stroke:0.90px #fff;transform:scaleX(0.9399);">Upgrade Now</div>
<svg style="position:absolute;left:3542.0px;top:1408.0px;" width="44" height="44" viewBox="0 0 24 24"><path d="M12 4l-1.41 1.41L16.17 11H4v2h12.17l-5.58 5.59L12 20l8-8z" fill="#fff" /></svg>
<div class="t" style="left:240.67px;top:1587.42px;font-size:46.51px;line-height:46.51px;color:#333333;font-weight:bold;transform:scaleX(0.9765);">Recent Shipments</div>
<div class="t" style="left:2478.00px;top:1592.26px;font-size:34.88px;line-height:34.88px;color:#0b76f0;-webkit-text-stroke:0.94px #0b76f0;transform:scaleX(0.9246);">View All Shipments</div>
<div class="t" style="left:289.21px;top:1681.17px;font-size:29.80px;line-height:29.80px;color:#333333;-webkit-text-stroke:0.80px #333333;transform:scaleX(0.8939);">BOL</div>
<div class="t" style="left:847.55px;top:1681.17px;font-size:29.80px;line-height:29.80px;color:#333333;-webkit-text-stroke:0.80px #333333;transform:scaleX(0.9491);">Origin</div>
<div class="t" style="left:1528.07px;top:1681.17px;font-size:29.80px;line-height:29.80px;color:#333333;-webkit-text-stroke:0.80px #333333;transform:scaleX(0.9670);">Destination</div>
<div class="t" style="left:2085.07px;top:1681.17px;font-size:29.80px;line-height:29.80px;color:#333333;-webkit-text-stroke:0.80px #333333;transform:scaleX(0.9670);">Pickup</div>
<div class="t" style="left:2396.16px;top:1681.17px;font-size:29.80px;line-height:29.80px;color:#333333;-webkit-text-stroke:0.80px #333333;transform:scaleX(0.9210);">Rate</div>
<div style="position:absolute;left:242px;top:1747px;width:2512px;height:152px;background:#fff;border:2px solid #e8e8e8;box-sizing:border-box;border-radius:31px"></div>
<div style="position:absolute;left:292px;top:1784px;width:80px;height:80px;background:#1c6d3a;border-radius:50%"></div>
<svg style="position:absolute;left:292px;top:1784px;" width="80" height="80" viewBox="0 0 80 80"><text x="16" y="44" font-family="Liberation Sans" font-weight="bold" font-style="italic" font-size="24" fill="#fff" stroke="#fff" stroke-width="0.8" textLength="50" lengthAdjust="spacingAndGlyphs">ABF</text><path d="M9 50.5 L12 46.5 H40 L37.5 50.5Z" fill="#fff"/><text x="40" y="51.5" font-family="Liberation Sans" font-weight="bold" font-style="italic" font-size="6.5" fill="#fff" textLength="21" lengthAdjust="spacingAndGlyphs">Freight</text><path d="M60 27 H66" stroke="#fff" stroke-width="0.8"/></svg>
<div class="t" style="left:404.03px;top:1784.19px;font-size:38.52px;line-height:38.52px;color:#333333;font-weight:bold;transform:scaleX(0.9693);">6508972</div>
<div class="t" style="left:404.04px;top:1838.37px;font-size:24.13px;line-height:24.13px;color:#666666;transform:scaleX(0.9582);">PO: 21140-1</div>
<div class="t" style="left:849.00px;top:1789.07px;font-size:29.80px;line-height:29.80px;color:#333333;font-weight:bold;transform:scaleX(0.8767);">AMGO Hydraulics</div>
<div class="t" style="left:847.20px;top:1832.65px;font-size:26.16px;line-height:26.16px;color:#666666;transform:scaleX(0.9025);">Dallas, Texas</div>
<div class="t" style="left:1528.25px;top:1789.07px;font-size:29.80px;line-height:29.80px;color:#333333;font-weight:bold;transform:scaleX(0.8773);">Marlan Express Lube</div>
<div class="t" style="left:1528.17px;top:1832.65px;font-size:26.16px;line-height:26.16px;color:#666666;transform:scaleX(0.9129);">Hobbs, New Mexico</div>
<div class="t" style="left:2084.90px;top:1786.19px;font-size:29.07px;line-height:29.07px;color:#333333;transform:scaleX(1.0503);">10/21/25</div>
<div style="position:absolute;left:2086px;top:1822px;width:143px;height:46px;background:#f2f8ff;border:2.5px solid #0a7aff;box-sizing:border-box;border-radius:23px"></div>
<div class="t" style="left:2102.14px;top:1831.65px;font-size:26.16px;line-height:26.16px;color:#0a74ea;transform:scaleX(0.9276);">Booked</div>
<svg style="position:absolute;left:2199px;top:1841px;" width="20" height="11" viewBox="0 0 20 11"><path d="M0 0 H19.5 L9.75 10Z" fill="#0a74ea"/></svg>
<svg style="position:absolute;left:2401.5px;top:1803px;" width="36" height="40" viewBox="0 0 36 40"><path d="M18 2 L33 8 V19 Q33 32 18 38 Q3 32 3 19 V8Z" fill="none" stroke="#e53935" stroke-width="3.6" stroke-linejoin="round"/><path d="M13 15 L23 25 M23 15 L13 25" stroke="#e53935" stroke-width="3.6" stroke-linecap="round"/></svg>
<div class="t" style="left:2453.00px;top:1804.17px;font-size:39.24px;line-height:39.24px;color:#333333;font-weight:bold;transform:scaleX(0.8991);">$274.51 USD</div>
<div style="position:absolute;left:242px;top:1916px;width:2512px;height:152px;background:#fff;border:2px solid #e8e8e8;box-sizing:border-box;border-radius:31px"></div>
<div style="position:absolute;left:292px;top:1953px;width:80px;height:80px;background:#1c6d3a;border-radius:50%"></div>
<svg style="position:absolute;left:292px;top:1953px;" width="80" height="80" viewBox="0 0 80 80"><text x="16" y="44" font-family="Liberation Sans" font-weight="bold" font-style="italic" font-size="24" fill="#fff" stroke="#fff" stroke-width="0.8" textLength="50" lengthAdjust="spacingAndGlyphs">ABF</text><path d="M9 50.5 L12 46.5 H40 L37.5 50.5Z" fill="#fff"/><text x="40" y="51.5" font-family="Liberation Sans" font-weight="bold" font-style="italic" font-size="6.5" fill="#fff" textLength="21" lengthAdjust="spacingAndGlyphs">Freight</text><path d="M60 27 H66" stroke="#fff" stroke-width="0.8"/></svg>
<div class="t" style="left:404.04px;top:1953.19px;font-size:38.52px;line-height:38.52px;color:#333333;font-weight:bold;transform:scaleX(0.9628);">8716548</div>
<div class="t" style="left:404.03px;top:2007.37px;font-size:24.13px;line-height:24.13px;color:#666666;transform:scaleX(0.9720);">PO: 21140</div>
<div class="t" style="left:849.00px;top:1958.07px;font-size:29.80px;line-height:29.80px;color:#333333;font-weight:bold;transform:scaleX(0.8767);">AMGO Hydraulics</div>
<div class="t" style="left:847.20px;top:2001.65px;font-size:26.16px;line-height:26.16px;color:#666666;transform:scaleX(0.9024);">Manning, South Carolina</div>
<div class="t" style="left:1528.25px;top:1958.07px;font-size:29.80px;line-height:29.80px;color:#333333;font-weight:bold;transform:scaleX(0.8773);">Marlan Express Lube</div>
<div class="t" style="left:1528.17px;top:2001.65px;font-size:26.16px;line-height:26.16px;color:#666666;transform:scaleX(0.9129);">Hobbs, New Mexico</div>
<div class="t" style="left:2084.90px;top:1955.19px;font-size:29.07px;line-height:29.07px;color:#333333;transform:scaleX(1.0503);">10/21/25</div>
<div style="position:absolute;left:2086px;top:1991px;width:143px;height:46px;background:#f2f8ff;border:2.5px solid #0a7aff;box-sizing:border-box;border-radius:23px"></div>
<div class="t" style="left:2102.14px;top:2000.65px;font-size:26.16px;line-height:26.16px;color:#0a74ea;transform:scaleX(0.9276);">Booked</div>
<svg style="position:absolute;left:2199px;top:2010px;" width="20" height="11" viewBox="0 0 20 11"><path d="M0 0 H19.5 L9.75 10Z" fill="#0a74ea"/></svg>
<svg style="position:absolute;left:2401.5px;top:1972px;" width="36" height="40" viewBox="0 0 36 40"><path d="M18 2 L33 8 V19 Q33 32 18 38 Q3 32 3 19 V8Z" fill="none" stroke="#0a7aff" stroke-width="3.6" stroke-linejoin="round"/><path d="M11.5 20 L16 24.5 L24.5 15.5" stroke="#0a7aff" stroke-width="3.6" fill="none" stroke-linecap="round" stroke-linejoin="round"/></svg>
<div class="t" style="left:2453.00px;top:1973.17px;font-size:39.24px;line-height:39.24px;color:#333333;font-weight:bold;transform:scaleX(0.8991);">$1,207.80 USD</div>
<div class="t" style="left:2872.76px;top:1663.96px;font-size:49.42px;line-height:49.42px;color:#333333;font-weight:bold;transform:scaleX(0.9148);">Delivering Shipments</div>
<div class="t" style="left:2892.43px;top:1775.05px;font-size:29.94px;line-height:29.94px;color:#aaaaaa;transform:scaleX(0.9186);-webkit-text-stroke:0.9px #aaaaaa;">Sun</div>
<div style="position:absolute;left:2875.1px;top:1829.5px;width:83px;height:83px;background:#fafafa;border:2px solid #e8e8e8;box-sizing:border-box;border-radius:50%"></div>
<div class="t" style="left:2897.58px;top:1855.49px;font-size:33.43px;line-height:33.43px;color:#333333;transform:scaleX(1.0123);-webkit-text-stroke:0.9px #333;">19</div>
<div class="t" style="left:2995.86px;top:1775.05px;font-size:29.94px;line-height:29.94px;color:#aaaaaa;transform:scaleX(0.9947);-webkit-text-stroke:0.9px #aaaaaa;">Mon</div>
<div style="position:absolute;left:2983.5px;top:1829.5px;width:83px;height:83px;background:#fafafa;border:2px solid #e8e8e8;box-sizing:border-box;border-radius:50%"></div>
<div class="t" style="left:3007.04px;top:1855.49px;font-size:33.43px;line-height:33.43px;color:#333333;transform:scaleX(0.9554);-webkit-text-stroke:0.9px #333;">20</div>
<div class="t" style="left:3110.75px;top:1775.05px;font-size:29.94px;line-height:29.94px;color:#aaaaaa;transform:scaleX(0.9092);-webkit-text-stroke:0.9px #aaaaaa;">Tue</div>
<div style="position:absolute;left:3092.9px;top:1831px;width:81px;height:81px;background:#0a7aff;border-radius:50%"></div>
<div class="t" style="left:3115.95px;top:1855.49px;font-size:33.43px;line-height:33.43px;color:#fff;transform:scaleX(0.9541);-webkit-text-stroke:0.9px #fff;">21</div>
<div class="t" style="left:3215.05px;top:1775.05px;font-size:29.94px;line-height:29.94px;color:#aaaaaa;transform:scaleX(0.9012);-webkit-text-stroke:0.9px #aaaaaa;">Wed</div>
<div style="position:absolute;left:3200.3px;top:1829.5px;width:83px;height:83px;background:#fafafa;border:2px solid #e8e8e8;box-sizing:border-box;border-radius:50%"></div>
<div class="t" style="left:3223.82px;top:1855.49px;font-size:33.43px;line-height:33.43px;color:#333333;transform:scaleX(0.9830);-webkit-text-stroke:0.9px #333;">22</div>
<div class="t" style="left:3326.95px;top:1775.05px;font-size:29.94px;line-height:29.94px;color:#aaaaaa;transform:scaleX(0.9312);-webkit-text-stroke:0.9px #aaaaaa;">Thu</div>
<div style="position:absolute;left:3308.7px;top:1829.5px;width:83px;height:83px;background:#fafafa;border:2px solid #e8e8e8;box-sizing:border-box;border-radius:50%"></div>
<div class="t" style="left:3332.24px;top:1855.49px;font-size:33.43px;line-height:33.43px;color:#333333;transform:scaleX(0.9554);-webkit-text-stroke:0.9px #333;">23</div>
<div class="t" style="left:3441.40px;top:1775.05px;font-size:29.94px;line-height:29.94px;color:#aaaaaa;transform:scaleX(0.9758);-webkit-text-stroke:0.9px #aaaaaa;">Fri</div>
<div style="position:absolute;left:3417.1px;top:1829.5px;width:83px;height:83px;background:#fafafa;border:2px solid #e8e8e8;box-sizing:border-box;border-radius:50%"></div>
<div class="t" style="left:3440.64px;top:1855.49px;font-size:33.43px;line-height:33.43px;color:#333333;transform:scaleX(0.9554);-webkit-text-stroke:0.9px #333;">24</div>
<div class="t" style="left:3546.10px;top:1775.05px;font-size:29.94px;line-height:29.94px;color:#aaaaaa;transform:scaleX(0.8965);-webkit-text-stroke:0.9px #aaaaaa;">Sat</div>
<div style="position:absolute;left:3525.5px;top:1829.5px;width:83px;height:83px;background:#fafafa;border:2px solid #e8e8e8;box-sizing:border-box;border-radius:50%"></div>
<div class="t" style="left:3549.04px;top:1855.49px;font-size:33.43px;line-height:33.43px;color:#333333;transform:scaleX(0.9554);-webkit-text-stroke:0.9px #333;">25</div>
<div class="t" style="left:3125.90px;top:1926.35px;font-size:26.16px;line-height:26.16px;color:#aaaaaa;">2</div>
<div class="t" style="left:3234.30px;top:1926.35px;font-size:26.16px;line-height:26.16px;color:#aaaaaa;">2</div>
<div class="t" style="left:3342.20px;top:1926.35px;font-size:26.16px;line-height:26.16px;color:#aaaaaa;">1</div>
<svg style="position:absolute;left:2805.0px;top:1839.5px;" width="42" height="42" viewBox="0 0 24 24"><path d="M15.41 7.41L14 6l-6 6 6 6 1.41-1.41L10.83 12z" fill="#9e9e9e" /></svg>
<svg style="position:absolute;left:3637.0px;top:1839.5px;" width="42" height="42" viewBox="0 0 24 24"><path d="M10 6L8.59 7.41 13.17 12l-4.58 4.59L10 18l6-6z" fill="#9e9e9e" /></svg>
<div style="position:absolute;left:2834px;top:1992px;width:80px;height:80px;background:#1c6d3a;border-radius:50%"></div>
<svg style="position:absolute;left:2834px;top:1992px;" width="80" height="80" viewBox="0 0 80 80"><text x="16" y="44" font-family="Liberation Sans" font-weight="bold" font-style="italic" font-size="24" fill="#fff" stroke="#fff" stroke-width="0.8" textLength="50" lengthAdjust="spacingAndGlyphs">ABF</text><path d="M9 50.5 L12 46.5 H40 L37.5 50.5Z" fill="#fff"/><text x="40" y="51.5" font-family="Liberation Sans" font-weight="bold" font-style="italic" font-size="6.5" fill="#fff" textLength="21" lengthAdjust="spacingAndGlyphs">Freight</text><path d="M60 27 H66" stroke="#fff" stroke-width="0.8"/></svg>
<div class="t" style="left:2947.00px;top:1999.53px;font-size:36.34px;line-height:36.34px;color:#333333;font-weight:bold;transform:scaleX(1.0127);">3638489</div>
<div class="t" style="left:2945.96px;top:2050.65px;font-size:26.16px;line-height:26.16px;color:#666666;transform:scaleX(1.0352);">Columbus, OH  &gt;  Douglas, ND</div>
<div style="position:absolute;left:3497px;top:1993px;width:143px;height:46px;background:#f2f8ff;border:2.5px solid #0a7aff;box-sizing:border-box;border-radius:23px"></div>
<div class="t" style="left:3513.14px;top:2002.65px;font-size:26.16px;line-height:26.16px;color:#0a74ea;transform:scaleX(0.9276);">Booked</div>
<svg style="position:absolute;left:3610px;top:2012px;" width="20" height="11" viewBox="0 0 20 11"><path d="M0 0 H19.5 L9.75 10Z" fill="#0a74ea"/></svg>
<div style="position:absolute;left:0px;top:2064px;width:3840px;height:96px;background:#202020"></div>
<svg style="position:absolute;left:41px;top:2090px;" width="46" height="46" viewBox="0 0 46 46"><defs><linearGradient id="wg" x1="0" y1="0" x2="1" y2="1"><stop offset="0" stop-color="#7fd3ff"/><stop offset="1" stop-color="#1a8fe8"/></linearGradient></defs><rect x="0" y="0" width="22" height="22" fill="url(#wg)"/><rect x="24" y="0" width="22" height="22" fill="url(#wg)"/><rect x="0" y="24" width="22" height="22" fill="url(#wg)"/><rect x="24" y="24" width="22" height="22" fill="url(#wg)"/></svg>
<div style="position:absolute;left:115px;top:2081px;width:438px;height:63px;background:#3a3a3a;border:1.5px solid #4c4c4c;box-sizing:border-box;border-radius:32px"></div>
<svg style="position:absolute;left:138px;top:2100px;" width="30" height="30" viewBox="0 0 30 30"><circle cx="12" cy="12" r="9" stroke="#fff" stroke-width="3" fill="#5a5a5a"/><path d="M19 19 L27 27" stroke="#fff" stroke-width="3.2" stroke-linecap="round"/></svg>
<div class="t" style="left:187.07px;top:2099.30px;font-size:28.34px;line-height:28.34px;color:#e8e8e8;transform:scaleX(0.9310);">Search</div>
<svg style="position:absolute;left:449px;top:2083px;" width="96" height="60" viewBox="0 0 96 60"><ellipse cx="48" cy="30" rx="46" ry="27" fill="#cfe3ef"/><path d="M8 36 L28 14 L40 20 L55 8 L72 18 L88 30 L86 44 H10Z" fill="#c8794a"/><ellipse cx="46" cy="46" rx="40" ry="9" fill="#e8c6b5"/><ellipse cx="36" cy="45" rx="20" ry="4" fill="#5fb6d8"/></svg>
<svg style="position:absolute;left:580px;top:2091px;" width="46" height="42" viewBox="0 0 46 42"><defs><linearGradient id="cpa" x1="0" y1="0" x2="0" y2="1"><stop offset="0" stop-color="#19a7f5"/><stop offset=".5" stop-color="#4cb56a"/><stop offset=".85" stop-color="#e8cf1a"/></linearGradient><linearGradient id="cpb" x1="0" y1="0" x2="0" y2="1"><stop offset="0" stop-color="#a650ee"/><stop offset=".5" stop-color="#f0608a"/><stop offset="1" stop-color="#fb9a4a"/></linearGradient></defs><path d="M20 1 H30 Q34 1 35 6 L36 13 H22Z" fill="#2050dc"/><path d="M10 28 H22 L19 41 H16 Q12 41 11 36Z" fill="#f05a38"/><path d="M10 1 H25 L17 28 Q16 30 13 30 H3 Q-0.5 30 0.5 26 L5 8 Q7 1 10 1Z" fill="url(#cpa)"/><path d="M26 12 H40 Q44.5 12 43.5 17 L38 35 Q36 41 31 41 H15 L23.5 15 Q24.5 12 26 12Z" fill="url(#cpb)"/><path d="M21 14 H25 L18 29 H15.5Z" fill="#1e2a2a"/></svg>
<svg style="position:absolute;left:666px;top:2088px;" width="48" height="48" viewBox="0 0 48 48"><circle cx="24" cy="24" r="24" fill="#db3a2e"/><path d="M24 24 L3.2 12 A24 24 0 0 0 12 44.8Z" fill="#1e9e4a"/><path d="M24 24 L12 44.8 A24 24 0 0 0 44.8 12 Z" fill="#fbc02d"/><path d="M24 24 L44.8 12 H24Z" fill="#db3a2e"/><circle cx="24" cy="24" r="11" fill="#fff"/><circle cx="24" cy="24" r="8.5" fill="#3b78e7"/></svg>
<div style="position:absolute;left:684px;top:2144px;width:12px;height:6px;background:#a0a0a0;border-radius:3px"></div>
<svg style="position:absolute;left:754px;top:2091px;" width="48" height="44" viewBox="0 0 48 44"><path d="M0 4 Q0 0 4 0 H16 L21 5 H48 V44 H0Z" fill="#f0b72f"/><rect x="0" y="7" width="48" height="37" rx="1" fill="#fcd658"/><rect x="8" y="28" width="32" height="16" rx="5" fill="#1b75d0"/><rect x="14" y="32" width="20" height="2.5" fill="#0d4a8c"/></svg>
<svg style="position:absolute;left:842px;top:2088px;" width="50" height="50" viewBox="0 0 50 50"><rect x="0" y="0" width="36" height="36" rx="5" fill="#f2f2f2"/><g fill="#e0361b"><rect x="5" y="5" width="5" height="5"/><rect x="13" y="5" width="5" height="5"/><rect x="21" y="5" width="5" height="5"/><rect x="5" y="13" width="5" height="5"/><rect x="5" y="21" width="5" height="5"/></g><path d="M12 30 H34 V8" stroke="#8c8c8c" stroke-width="3.5" fill="none"/><circle cx="43" cy="26" r="5" stroke="#29a3e0" stroke-width="3" fill="none"/><circle cx="32" cy="43" r="5" stroke="#29a3e0" stroke-width="3" fill="none"/><path d="M30 30 L40 28 M34 32 L32 38" stroke="#29a3e0" stroke-width="3"/></svg>
<svg style="position:absolute;left:930px;top:2088px;" width="48" height="48" viewBox="0 0 48 48"><path d="M35 1 L47 7 V41 L35 47 L13 27 L5 33 L1 30 V18 L5 15 L13 21Z" fill="#1f8fdc"/><path d="M35 1 L47 7 V41 L35 47Z" fill="#2aa5f0"/><path d="M35 13 V35 L20 24Z" fill="#202020"/><path d="M1 18 L5 15 L35 42 V47 Z" fill="#0f6fb8" opacity=".6"/></svg>
<div style="position:absolute;left:948px;top:2144px;width:12px;height:6px;background:#a0a0a0;border-radius:3px"></div>
<svg style="position:absolute;left:3328px;top:2103px;" width="26" height="16" viewBox="0 0 26 16"><path d="M2 14 L13 3 L24 14" stroke="#fff" stroke-width="3" fill="none"/></svg>
<svg style="position:absolute;left:3392px;top:2096px;" width="26" height="32" viewBox="0 0 26 32"><ellipse cx="13" cy="16" rx="12" ry="15.5" fill="#1c8cf0"/><path d="M8 10 L17 19 L12.5 24 V8 L17 13 L8 22" stroke="#fff" stroke-width="2.2" fill="none"/></svg>
<svg style="position:absolute;left:3454px;top:2096px;" width="34" height="34" viewBox="0 0 34 34"><path d="M15 1 L29 6 V16 Q29 26 15 31 Q1 26 1 16 V6Z" fill="#2a9ae6"/><path d="M15 1 L29 6 V16 Q29 26 15 31Z" fill="#47b5f5"/><circle cx="23" cy="25" r="9" fill="#2aa13b" stroke="#202020" stroke-width="1.5"/><path d="M18.5 25 L22 28.5 L27.5 22" stroke="#fff" stroke-width="2.4" fill="none"/></svg>
<svg style="position:absolute;left:3516px;top:2099px;" width="34" height="27" viewBox="0 0 34 27"><g stroke="#fff" stroke-width="2.6" fill="none" stroke-linecap="round"><path d="M2 9 Q17 -4 32 9"/><path d="M7.5 14.5 Q17 6 26.5 14.5"/><path d="M12.5 19.5 Q17 15.5 21.5 19.5"/></g><circle cx="17" cy="24" r="2.6" fill="#fff"/></svg>
<svg style="position:absolute;left:3564px;top:2097px;" width="34" height="30" viewBox="0 0 34 30"><path d="M2 10 H8 L16 3 V27 L8 20 H2Z" stroke="#fff" stroke-width="2.4" fill="none" stroke-linejoin="round"/><path d="M21 10 Q24 15 21 20 M25 6 Q31 15 25 24 M29 2 Q37 15 29 28" stroke="#fff" stroke-width="2.4" fill="none" stroke-linecap="round"/></svg>
<svg style="position:absolute;left:3612px;top:2101px;" width="35" height="22" viewBox="0 0 35 22"><rect x="2" y="2" width="27" height="18" rx="4" stroke="#fff" stroke-width="2.6" fill="none"/><rect x="6" y="6" width="19" height="10" rx="1" fill="#fff"/><rect x="30" y="7.5" width="3.5" height="7" rx="1.5" fill="#fff"/></svg>
<div class="t" style="left:3716.03px;top:2083.88px;font-size:24.71px;line-height:24.71px;color:#fff;transform:scaleX(0.9691);">7:47 am</div>
<div class="t" style="left:3678.00px;top:2115.88px;font-size:24.71px;line-height:24.71px;color:#fff;">21/10/2025</div>
</body></html>
